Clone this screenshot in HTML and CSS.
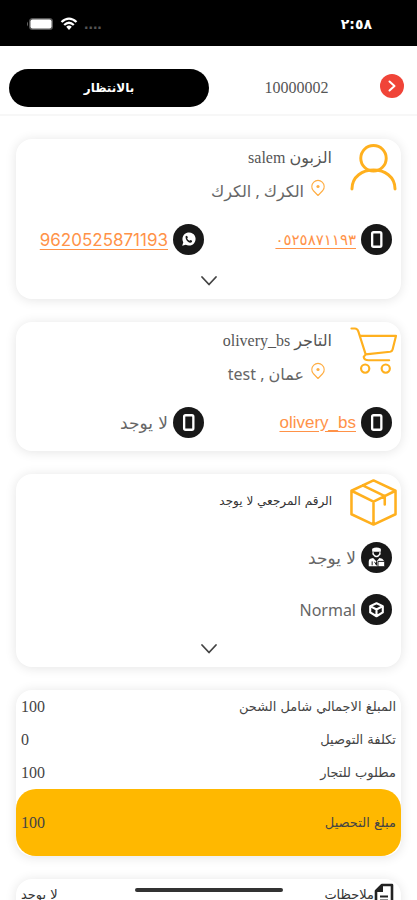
FILE: index.html
```html
<!DOCTYPE html>
<html lang="ar" dir="rtl">
<head>
<meta charset="utf-8">
<meta name="viewport" content="width=device-width, initial-scale=1">
<title>تفاصيل الطلب</title>
<link rel="stylesheet" href="styles.css">
</head>
<body>
<svg class="symbols" aria-hidden="true">
  <symbol id="phone" viewBox="0 0 32 32"><rect x="11.500" y="8.500" width="9.500" height="15" rx="1.500" fill="none" stroke="#fff" stroke-width="2.400"/></symbol>
  <symbol id="pin" viewBox="0 0 16 18"><path d="M8 16.500 3.200 11.500A6.200 6.200 0 1 1 12.800 11.500Z" fill="none" stroke="#ffad42" stroke-width="1.100" stroke-linejoin="round"/><circle cx="8" cy="7.500" r="1.600" fill="#ffad42"/></symbol>
  <symbol id="chevron" viewBox="0 0 18 12"><path d="M2 2 9 9.500 16 2" fill="none" stroke="#444" stroke-width="1.800" stroke-linecap="round" stroke-linejoin="round"/></symbol>
</svg>
<div class="screen">
  <div class="status">
    <span class="clock">٢:٥٨</span>
    <span class="signals">
      <span class="dots">....</span>
      <svg width="18" height="14" viewBox="0 0 18 14"><g fill="none" stroke="#fff" stroke-width="2.300"><path d="M1.500 5Q9-1.800 16.500 5"/><path d="M4.200 8Q9 3.600 13.800 8"/></g><path d="M6.200 9.700Q9 7.500 11.800 9.700L9 13Z" fill="#fff"/></svg>
      <svg width="28" height="14" viewBox="0 0 28 14"><rect x="3" y="1" width="24" height="12" rx="3.500" fill="#555"/><rect x="4.500" y="2.500" width="21" height="9" rx="2" fill="#fff"/><path d="M2 4.500Q0 7 2 9.500Z" fill="#666"/></svg>
    </span>
  </div>
  <header class="header">
    <button class="back" type="button" aria-label="رجوع"><svg width="24" height="24" viewBox="0 0 24 24"><circle cx="12" cy="12" r="12" fill="#f04438"/><path d="m9.500 7.500 5 4.500-5 4.500" fill="none" stroke="#fff" stroke-width="2" stroke-linecap="round" stroke-linejoin="round"/></svg></button>
    <h1 class="order">10000002</h1>
    <button class="state" type="button">بالانتظار</button>
  </header>
  <main class="content">
    <section class="card">
      <div class="head">
        <svg class="art" viewBox="0 0 48 48" fill="none" stroke="#ffb01e" stroke-width="3" stroke-linecap="round"><circle cx="24" cy="14.500" r="13"/><path d="M2 46C2 20 46 20 46 46"/></svg>
        <div class="info">
          <h2 class="name">الزبون salem</h2>
          <p class="place"><svg class="pin"><use href="#pin"/></svg>الكرك , الكرك</p>
        </div>
      </div>
      <div class="contacts">
        <div class="contact"><span class="disc"><svg><use href="#phone"/></svg></span><a class="arabic-number" href="#tel">٠٥٢٥٨٧١١٩٣</a></div>
        <div class="contact"><span class="disc"><svg viewBox="0 0 32 32"><path d="m9.500 22.500 1.100-3.700a6.800 6.800 0 1 1 2.600 2.600Z" fill="#fff"/><path d="M13 12.700c.6-.9 1.500-.8 1.800 0l.5 1.200-.7 1c.6 1.200 1.400 2 2.600 2.500l.9-.9 1.600.8c.2 1.200-.7 2-1.900 2-2.800-.3-5.200-3.600-4.800-6.600" fill="#181818"/></svg></span><a class="number" href="#whatsapp">9620525871193</a></div>
      </div>
      <button class="more" type="button" aria-label="المزيد"><svg><use href="#chevron"/></svg></button>
    </section>

    <section class="card">
      <div class="head">
        <svg class="art" viewBox="0 0 48 48" fill="none" stroke="#ffb01e" stroke-width="2.200" stroke-linecap="round" stroke-linejoin="round"><path d="M1.500 1.500H5Q7.500 1.500 8.500 4.500L16 28 14 30.500Q14.500 34 19 34H40M11 9H47L43.500 23Q43 25 41 25.300L16 28"/><circle cx="15.500" cy="42.500" r="4.200"/><circle cx="36.500" cy="42.500" r="4.200"/></svg>
        <div class="info">
          <h2 class="name">التاجر olivery_bs</h2>
          <p class="place"><svg class="pin"><use href="#pin"/></svg>عمان , test</p>
        </div>
      </div>
      <div class="contacts">
        <div class="contact"><span class="disc"><svg><use href="#phone"/></svg></span><a class="merchant" href="#merchant">olivery_bs</a></div>
        <div class="contact"><span class="disc"><svg><use href="#phone"/></svg></span><span class="empty">لا يوجد</span></div>
      </div>
    </section>

    <section class="card">
      <div class="head">
        <svg class="art" viewBox="0 0 48 48" fill="none" stroke="#ffb01e" stroke-width="2.600" stroke-linecap="round" stroke-linejoin="round"><path d="m24 1.500 22.500 10.500V36L24 46.500 1.500 36V12ZM1.500 12 24 23 46.500 12M24 23V46.500M13 6.500 35.500 17.500V26"/></svg>
        <h2 class="reference">الرقم المرجعي لا يوجد</h2>
      </div>
      <div class="details">
        <div class="contact"><span class="disc"><svg viewBox="0 0 32 32"><path d="M11.500 7Q16 4.500 20.500 7V10H11.500Z" fill="#fff"/><path d="M12.500 10.500V12.500Q16 17.500 19.500 12.500V10.500" fill="none" stroke="#fff" stroke-width="1.500"/><path d="M8 25V20Q8 17 12.500 16.500L16 20 19 16.500Q22.500 16.800 23.500 19V25Z" fill="#fff"/><path d="M11.500 20V24M14 20.500 16 24V20" stroke="#181818" stroke-width="1" fill="none"/><path d="M17.500 20H24.500V25.500H17.500Z" fill="#fff" stroke="#181818"/></svg></span><span class="empty">لا يوجد</span></div>
        <div class="contact"><span class="disc"><svg viewBox="0 0 32 32" fill="none" stroke="#fff" stroke-width="2.200" stroke-linejoin="round"><path d="m16 9.500 6.500 3V19L16 23 9.500 19V12.500ZM9.500 12.500 16 16 22.500 12.500M16 16V23"/></svg></span><span>Normal</span></div>
      </div>
      <button class="more" type="button" aria-label="المزيد"><svg><use href="#chevron"/></svg></button>
    </section>

    <section class="card">
      <dl class="sums">
        <div class="sum"><dt>المبلغ الاجمالي شامل الشحن</dt><dd>100</dd></div>
        <div class="sum"><dt>تكلفة التوصيل</dt><dd>0</dd></div>
        <div class="sum"><dt>مطلوب للتجار</dt><dd>100</dd></div>
        <div class="sum total"><dt>مبلغ التحصيل</dt><dd>100</dd></div>
      </dl>
    </section>

    <section class="card notes">
      <svg class="note-icon" viewBox="0 0 20 24"><path d="M8 2H18V22H2V8Z" fill="none" stroke="#222" stroke-width="2.600" stroke-linejoin="round"/><path d="M2 9V8L8 2H9V9Z" fill="#222"/><path d="M6 13.500H14M6 17.500H14" stroke="#222" stroke-width="2"/></svg>
      <h2 class="note-title">ملاحظات</h2>
      <p class="note-text">لا يوجد</p>
    </section>
  </main>
  <div class="handle"></div>
</div>
</body>
</html>
```
FILE: styles.css
```css
* { box-sizing: border-box; }

body, h1, h2, p, dl, dd { margin: 0; }

body {
  background: #fff;
  color: #666;
  font: 16px/24px "Noto Sans", "DejaVu Sans", sans-serif;
}

h1, h2 { font-weight: 400; }

button {
  border: 0;
  padding: 0;
  background: none;
  font: inherit;
  cursor: pointer;
}

svg { display: block; flex: none; }

.symbols { position: absolute; width: 0; height: 0; }

.screen {
  display: flex;
  flex-direction: column;
  height: 100vh;
  overflow: hidden;
}

.status {
  display: flex;
  flex: none;
  align-items: center;
  justify-content: space-between;
  height: 46px;
  padding: 2px 45px 0 26px;
  background: #000;
  color: #fff;
}

.clock { font: bold 14px/24px "DejaVu Sans", sans-serif; }

.signals { display: flex; align-items: center; gap: 6px; }

.dots {
  color: #555;
  font: bold 16px/20px "Liberation Sans", sans-serif;
}

.header {
  display: flex;
  flex: none;
  align-items: center;
  height: 70px;
  padding: 16px 13px 0 9px;
  border-bottom: 2px solid #f7f7f7;
}

.back { padding-bottom: 4px; }

.order {
  flex: 1;
  color: #555;
  font: 16px/24px "Liberation Serif", serif;
  text-align: center;
}

.state {
  width: 200px;
  margin-inline-start: 4px;
  height: 38px;
  border-radius: 19px;
  background: #000;
  color: #fff;
  font: bold 12px/20px "DejaVu Sans", sans-serif;
}

.content {
  display: flex;
  flex: 1;
  flex-direction: column;
  gap: 23px;
  min-height: 0;
  padding: 23px 16px;
  overflow: auto;
  scrollbar-width: none;
}

.card {
  flex: none;
  border-radius: 16px;
  background: #fff;
  box-shadow: 0 1px 12px rgb(0 0 0 / 11%);
}

.head { display: flex; gap: 18px; padding: 5px 4px 0; }

.art { width: 47px; height: 47px; }

.info { padding-top: 2px; }

.name {
  color: #555;
  font: 16px/24px "Liberation Serif", "DejaVu Sans", serif;
}

.place {
  display: flex;
  gap: 6px;
  padding: 9px 6px 0;
}

.pin { width: 16px; height: 18px; }

.contacts {
  display: grid;
  grid-template-columns: 1fr 1fr;
  padding: 21px 9px 13px 0;
}

.contact { display: flex; align-items: center; gap: 5px; }

.disc {
  flex: none;
  width: 31px;
  height: 31px;
  border-radius: 50%;
  background: #181818;
}

.disc svg { width: 31px; height: 31px; }

a { color: #ff9248; text-underline-offset: 3px; }

.number { font: 17px/24px Inter, "Liberation Sans", sans-serif; }

.merchant { font: 17px/24px "Liberation Sans", sans-serif; }

.arabic-number { font: 15px/24px "DejaVu Sans", sans-serif; }

.empty { font: 17px/24px "DejaVu Sans", sans-serif; }

.more { display: block; width: 100%; padding: 7px 0 12px; }

.more svg { width: 18px; height: 12px; margin: 0 auto; }

.reference {
  padding-top: 10px;
  color: #333;
  font: 12px/24px "DejaVu Sans", sans-serif;
}

.details {
  display: grid;
  gap: 21px;
  padding: 16px 9px 11px;
}

.sum {
  display: flex;
  align-items: center;
  justify-content: space-between;
  height: 33px;
  padding: 0 5px;
  color: #444;
}

.sum dt { font: 13px/24px "DejaVu Sans", sans-serif; }

.sum dd { font: 16px/24px "Liberation Serif", serif; }

.total {
  height: 67px;
  border-radius: 20px;
  background: #ffb800;
}

.notes {
  display: flex;
  align-items: center;
  padding: 4px 7px 12px 5px;
  color: #333;
  font: 13px/24px "DejaVu Sans", sans-serif;
}

.note-icon { width: 20px; height: 24px; }

.note-title { font: inherit; }

.note-text { margin-inline-start: auto; }

.handle {
  position: fixed;
  bottom: 8px;
  left: 50%;
  width: 148px;
  height: 4px;
  border-radius: 2px;
  background: #333;
  transform: translateX(-50%);
}
```
